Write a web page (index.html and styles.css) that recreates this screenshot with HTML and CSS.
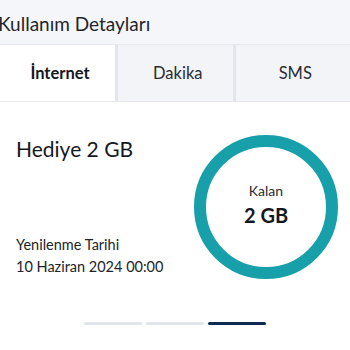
FILE: index.html
```html
<!DOCTYPE html>
<html lang="tr">
<head>
<meta charset="utf-8">
<link rel="stylesheet" href="styles.css">
</head>
<body>
<div class="page">
  <header class="header"><h1 class="title">Kullanım Detayları</h1></header>
  <nav class="tabs">
    <div class="tab active">İnternet</div>
    <div class="tab">Dakika</div>
    <div class="tab">SMS</div>
  </nav>
  <section class="usage">
    <div class="info">
      <h2 class="package">Hediye 2 GB</h2>
      <div class="renew">
        <div>Yenilenme Tarihi</div>
        <div>10 Haziran 2024 00:00</div>
      </div>
    </div>
    <div class="ring">
      <div class="ring-label">Kalan</div>
      <div class="ring-value">2 GB</div>
    </div>
  </section>
  <div class="dots">
    <span class="dot"></span>
    <span class="dot"></span>
    <span class="dot current"></span>
  </div>
</div>
</body>
</html>
```
FILE: styles.css
```css
* { box-sizing: border-box; margin: 0; padding: 0; }
html, body { width: 350px; height: 350px; overflow: hidden; background: #ffffff; }
body { font-family: "Lato", "Noto Sans", sans-serif; color: #1a1c22; }
.page { width: 350px; }
.header { height: 44px; background: #f5f6f9; display: flex; align-items: center; }
.title { font-size: 19px; font-weight: 400; margin-left: -2px; color: #23252b; margin-top: 2px; }
.tabs { display: flex; height: 58px; border-top: 1px solid #e6e8ee; border-bottom: 1px solid #e6e8ee; background: #f3f4f8; }
.tab { flex: 1; display: flex; align-items: center; justify-content: center; padding-left: 5px; font-size: 16.5px; color: #2a2c33; border-left: 3px solid #e3e5ec; }
.tab:first-child { border-left: none; flex: 0 0 115px; }
.tab.active { background: #ffffff; font-weight: 700; color: #16181d; }
.usage { display: flex; justify-content: space-between; padding: 31px 12px 0 16px; }
.info { display: flex; flex-direction: column; justify-content: space-between; padding: 3px 0 1px; }
.package { font-size: 21px; font-weight: 400; color: #16181d; }
.renew { font-size: 14.5px; line-height: 22px; color: #22242a; }
.ring { width: 144px; height: 144px; margin-top: 2px; border: 12px solid #17a0a9; border-radius: 50%; display: flex; flex-direction: column; align-items: center; justify-content: center; }
.ring-label { font-size: 14px; color: #2a2c33; margin-top: -6px; }
.ring-value { font-size: 20px; font-weight: 700; color: #16181d; margin-top: 4px; }
.dots { display: flex; justify-content: center; gap: 4px; margin-top: 43px; }
.dot { width: 58px; height: 3px; border-radius: 2px; background: #e2e5ec; }
.dot.current { background: #0f2a52; }
```
